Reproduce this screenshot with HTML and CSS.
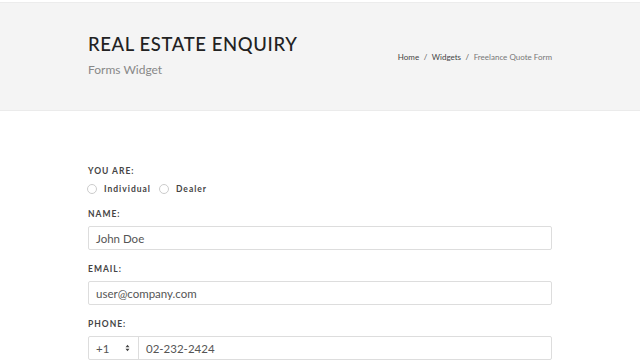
FILE: index.html
```html
<!DOCTYPE html>
<html>
<head>
<meta charset="utf-8">
<link rel="stylesheet" href="styles.css">
</head>
<body>
<header class="page-head">
  <div class="container head-row">
    <div class="titles">
      <h1 class="title">REAL ESTATE ENQUIRY</h1>
      <p class="subtitle">Forms Widget</p>
    </div>
    <nav class="crumbs">
      <a>Home</a><span class="sep">/</span><a>Widgets</a><span class="sep">/</span><span class="current">Freelance Quote Form</span>
    </nav>
  </div>
</header>
<main class="container form">
  <div class="field">
    <label class="lbl">YOU ARE:</label>
    <div class="radios">
      <span class="radio"><span class="dot"></span>Individual</span>
      <span class="radio"><span class="dot"></span>Dealer</span>
    </div>
  </div>
  <div class="field">
    <label class="lbl">NAME:</label>
    <div class="input">John Doe</div>
  </div>
  <div class="field">
    <label class="lbl">EMAIL:</label>
    <div class="input">user@company.com</div>
  </div>
  <div class="field">
    <label class="lbl">PHONE:</label>
    <div class="input phone">
      <div class="code">+1<svg class="arrows" width="5" height="8" viewBox="0 0 5 8"><path d="M0.5 3.2 L2.5 0.8 L4.5 3.2 Z M0.5 4.8 L2.5 7.2 L4.5 4.8 Z" fill="#444"/></svg></div>
      <div class="num">02-232-2424</div>
    </div>
  </div>
</main>
</body>
</html>
```
FILE: styles.css
```css
html, body { margin: 0; padding: 0; background: #fff; }
body { font-family: Lato, "Open Sans", sans-serif; color: #333; padding-top: 2px; }
.container { width: 464px; margin: 0 auto; }
.page-head { background: #f4f4f4; border-top: 1px solid #ececec; border-bottom: 1px solid #ebebeb; height: 109px; box-sizing: border-box; }
.head-row { display: flex; justify-content: space-between; align-items: center; height: 100%; }
.titles { padding-bottom: 4px; }
.title { margin: 0; font-size: 18.5px; font-weight: 500; letter-spacing: 0.6px; color: #222; line-height: 22px; }
.subtitle { margin: 8px 0 0; font-size: 12px; color: #888; line-height: 14px; }
.crumbs { font-size: 8px; color: #444; display: flex; align-items: center; }
.crumbs .sep { margin: 0 4.5px; color: #555; }
.crumbs .current { color: #777; }
.form { padding-top: 55px; }
.field { margin-bottom: 14px; }
.lbl { display: block; font-size: 8.5px; font-weight: 700; letter-spacing: 1px; color: #444; line-height: 10px; margin-bottom: 7px; }
.radios { display: flex; gap: 9px; margin-top: 2px; margin-bottom: 2px; }
.radio { display: flex; align-items: center; font-size: 8.5px; font-weight: 700; letter-spacing: 1px; color: #444; line-height: 12px; }
.dot { width: 8px; height: 8px; border: 1px solid #ccc; border-radius: 50%; margin-right: 7px; margin-left: -1px; background: #fff; }
.input { height: 24px; box-sizing: border-box; border: 1px solid #ddd; border-radius: 2px; font-size: 11.5px; color: #555; padding: 0 7px; display: flex; align-items: center; }
.phone { padding: 0; }
.code { width: 50px; height: 100%; box-sizing: border-box; border-right: 1px solid #ddd; display: flex; align-items: center; justify-content: space-between; padding: 0 8px 0 7px; color: #555; }
.num { padding: 0 7px; }
```
